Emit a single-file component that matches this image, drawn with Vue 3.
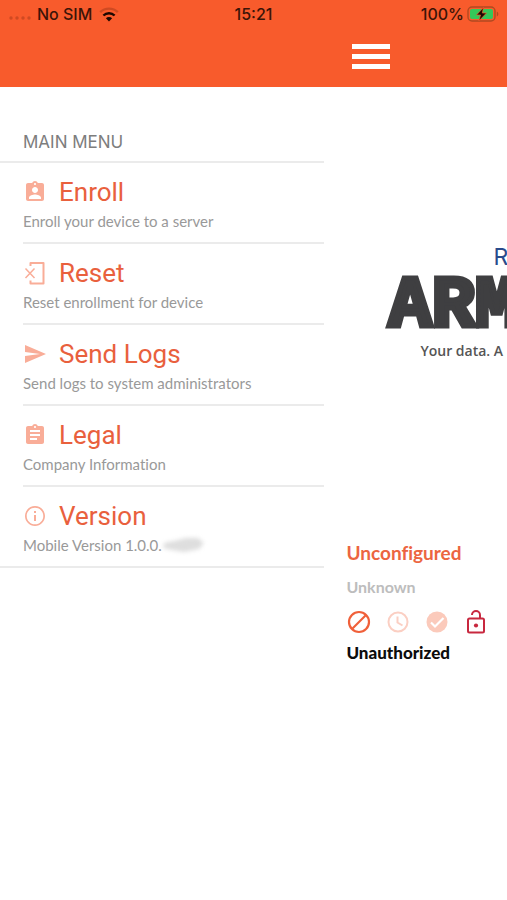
<script setup>
const items = [
  { id: 'enroll', title: 'Enroll', note: 'Enroll your device to a server' },
  { id: 'reset', title: 'Reset', note: 'Reset enrollment for device' },
  { id: 'send', title: 'Send Logs', note: 'Send logs to system administrators' },
  { id: 'legal', title: 'Legal', note: 'Company Information' },
  { id: 'version', title: 'Version', note: 'Mobile Version 1.0.0.', redacted: true },
]
</script>

<template>
  <div class="app">
    <header class="header">
      <div class="status">
        <div class="carrier">
          <svg class="dots" viewBox="0 0 24 6" aria-hidden="true">
            <g fill="#cf4a22">
              <circle cx="3" cy="3" r="1.700" /><circle cx="9" cy="3" r="1.700" />
              <circle cx="15" cy="3" r="1.700" /><circle cx="21" cy="3" r="1.700" />
            </g>
          </svg>
          <span>No SIM</span>
          <svg class="wifi" viewBox="0 0 20 15" aria-hidden="true">
            <g fill="none" stroke-width="2.400">
              <path d="M1.200 5.200a12.600 12.600 0 0 1 17.600 0" stroke="#cf4a22" />
              <path d="M4.400 8.500a8 8 0 0 1 11.200 0" stroke="#1d0802" />
            </g>
            <path d="M10 14.400 6.900 11.300a4.400 4.400 0 0 1 6.200 0z" fill="#1d0802" />
          </svg>
        </div>
        <span class="time">15:21</span>
        <div class="power">
          <span>100%</span>
          <svg class="battery" viewBox="0 0 32 16" aria-hidden="true">
            <rect x="1" y="1" width="27" height="14" rx="4" fill="none" stroke="#b04a20" stroke-width="1.400" />
            <rect x="3" y="3" width="23" height="10" rx="2" fill="#35c759" />
            <path d="M29.800 5.500v5c2-.8 2-4.200 0-5z" fill="#b04a20" />
            <path d="M16.500 1.500 9.500 9h4l-1.500 5.800L19.500 7h-4.200z" fill="#1d0802" stroke="#f85b2c" stroke-width=".7" />
          </svg>
        </div>
      </div>
      <div class="toolbar">
        <button class="burger" type="button" aria-label="Menu">
          <span></span><span></span><span></span>
        </button>
      </div>
    </header>

    <div class="body">
      <nav class="drawer">
        <h2 class="heading">MAIN MENU</h2>
        <ul class="list">
          <li v-for="item in items" :key="item.id" class="item">
            <button class="row" type="button">
              <span class="title">
                <svg class="icon" viewBox="0 0 24 24" aria-hidden="true">
                  <path v-if="item.id === 'enroll'" d="M19 3h-4.180C14.400 1.840 13.300 1 12 1s-2.400.84-2.820 2H5c-1.100 0-2 .9-2 2v14c0 1.100.9 2 2 2h14c1.100 0 2-.9 2-2V5c0-1.100-.9-2-2-2zm-7 0c.55 0 1 .45 1 1s-.45 1-1 1-1-.45-1-1 .45-1 1-1zm0 4c1.660 0 3 1.340 3 3s-1.340 3-3 3-3-1.340-3-3 1.340-3 3-3zm6 12H6v-1.400c0-2 4-3.100 6-3.100s6 1.100 6 3.100V19z" />
                  <g v-else-if="item.id === 'reset'" fill="none" stroke="currentColor">
                    <path d="M7.500 5V2H20.500v20.500H7.500V19.500" stroke-width="2" stroke-linejoin="round" />
                    <path d="M2.500 7.500l9 9.500M11.500 7.500l-9 9.500" stroke-width="1.500" />
                  </g>
                  <path v-else-if="item.id === 'send'" d="M2.010 21 23 12 2.010 3 2 10l15 2-15 2z" />
                  <path v-else-if="item.id === 'legal'" d="M19 3h-4.180C14.400 1.840 13.300 1 12 1s-2.400.84-2.820 2H5c-1.100 0-2 .9-2 2v14c0 1.100.9 2 2 2h14c1.100 0 2-.9 2-2V5c0-1.100-.9-2-2-2zm-7 0c.55 0 1 .45 1 1s-.45 1-1 1-1-.45-1-1 .45-1 1-1zm2 14H7v-2h7v2zm3-4H7v-2h10v2zm0-4H7V7h10v2z" />
                  <path v-else d="M11 17h2v-6h-2v6zm1-15C6.480 2 2 6.480 2 12s4.480 10 10 10 10-4.480 10-10S17.520 2 12 2zm0 18.300c-4.580 0-8.300-3.720-8.300-8.300S7.420 3.700 12 3.700s8.300 3.720 8.300 8.300-3.720 8.300-8.300 8.300zM11 9h2V7h-2v2z" />
                </svg>
                {{ item.title }}
              </span>
              <span class="note">
                {{ item.note }}
                <svg v-if="item.redacted" class="smudge" viewBox="0 0 44 18" aria-hidden="true">
                  <path d="M2 7 12 5 24 2 36 2 42 7 37 13 22 16 10 14 1 12z" fill="#dedede" />
                </svg>
              </span>
            </button>
          </li>
        </ul>
      </nav>

      <main class="page">
        <div class="brand">
          <span class="parent">R</span>
          <span class="name">ARM</span>
          <span class="slogan">Your data. A</span>
        </div>
        <section class="state">
          <p class="config">Unconfigured</p>
          <p class="unknown">Unknown</p>
          <div class="marks">
            <svg class="mark" viewBox="0 0 24 24" aria-hidden="true">
              <g fill="none" stroke="#f0603a" stroke-width="2.200"><circle cx="12" cy="12" r="10" /><path d="M5 19 19 5" /></g>
            </svg>
            <svg class="mark" viewBox="0 0 24 24" aria-hidden="true">
              <g fill="none" stroke="#fbcfc3" stroke-width="2"><circle cx="12" cy="12" r="9.500" /><path d="M11.500 6.500v6l5 3" /></g>
            </svg>
            <svg class="mark" viewBox="0 0 24 24" aria-hidden="true">
              <circle cx="12" cy="12" r="10.500" fill="#fbcabb" />
              <path d="M6 12.500l4 4 8.500-8.500" fill="none" stroke="#fff" stroke-width="2.200" />
            </svg>
            <svg class="mark" viewBox="0 0 24 24" aria-hidden="true">
              <g fill="none" stroke="#c8283f" stroke-width="2">
                <rect x="4" y="8.500" width="16" height="14" rx="1.500" />
                <path d="M8 5a4 4 0 0 1 8 0V8.500" />
              </g>
              <circle cx="12" cy="15.500" r="2.100" fill="#c8283f" />
            </svg>
          </div>
          <p class="auth">Unauthorized</p>
        </section>
      </main>
    </div>
  </div>
</template>

<style>
body {
  margin: 0;
  background: #fff;
}
</style>

<style scoped>
.app {
  min-height: 100vh;
  overflow: hidden;
  background: #fff;
  font-family: Lato, "Open Sans", sans-serif;
  font-variant-ligatures: none;
}
.header {
  background: #f85b2c;
}
.status {
  display: grid;
  grid-template-columns: 1fr auto 1fr;
  align-items: center;
  height: 28px;
  padding: 0 8px;
  font: 500 16px/28px Inter, sans-serif;
  color: #3b1408;
}
.carrier,
.power {
  display: flex;
  align-items: center;
}
.carrier {
  gap: 5px;
}
.power {
  justify-content: flex-end;
  gap: 3px;
}
.dots {
  width: 24px;
  height: 6px;
  margin-top: 8px;
}
.wifi {
  width: 20px;
  height: 15px;
  margin-left: 2px;
}
.battery {
  width: 32px;
  height: 16px;
}
.toolbar {
  display: flex;
  height: 59px;
  padding-left: 69%;
}
.burger {
  display: flex;
  flex-direction: column;
  gap: 5px;
  width: 42px;
  padding: 16px 2px;
  border: 0;
  background: none;
}
.burger span {
  height: 5px;
  background: #fff;
}
.body {
  display: flex;
}
.drawer {
  flex: 0 0 64%;
}
.heading {
  margin: 0;
  padding: 44px 0 8px 23px;
  border-bottom: 2px solid #ebebeb;
  font: 400 17px/22px Inter, sans-serif;
  color: #7d7d7d;
}
.list {
  margin: 0;
  padding: 0;
  list-style: none;
}
.item {
  margin-left: 23px;
  border-bottom: 2px solid #ebebeb;
}
.item:last-child {
  margin-left: 0;
  padding-left: 23px;
}
.row {
  display: block;
  width: 100%;
  padding: 13px 0 11px;
  border: 0;
  background: none;
  text-align: left;
}
.title {
  display: flex;
  align-items: center;
  gap: 12px;
  font: 400 26px/32px Roboto, sans-serif;
  color: #e9603d;
}
.icon {
  width: 24px;
  height: 24px;
  color: #f9ad98;
  fill: currentColor;
}
.note {
  display: flex;
  align-items: center;
  margin-top: 3px;
  font: 400 15px/20px Lato, sans-serif;
  font-variant-ligatures: none;
  color: #999;
}
.smudge {
  width: 44px;
  height: 18px;
  filter: blur(2px);
}
.page {
  flex: 1;
  min-width: 0;
  overflow: hidden;
  padding-left: 22px;
}
.brand {
  display: flex;
  flex-direction: column;
  padding: 156px 0 0 42px;
}
.parent {
  padding-left: 105px;
  font: 400 23px/28px Inter, sans-serif;
  color: #294b8c;
}
.name {
  font: 700 72px/72px "Liberation Mono", monospace;
  color: #3f3f41;
  -webkit-text-stroke: 5px #3f3f41;
}
.slogan {
  padding-left: 32px;
  font: 600 14px/16px "Open Sans", sans-serif;
  white-space: nowrap;
  color: #555;
}
.state {
  padding-top: 182px;
}
.state p {
  margin: 0;
}
.config {
  font-weight: 700;
  font-size: 19px;
  line-height: 24px;
  color: #ec6541;
}
.state .unknown {
  margin: 12px 0 10px;
  font-weight: 700;
  font-size: 16px;
  line-height: 20px;
  color: #bdbdbd;
}
.marks {
  display: flex;
  align-items: center;
  gap: 15px;
  height: 30px;
  padding-left: 1px;
}
.mark {
  flex: none;
  width: 24px;
  height: 24px;
}
.state .auth {
  margin-top: 6px;
  font-weight: 900;
  font-size: 17px;
  line-height: 20px;
  color: #0c0c0c;
}
</style>
